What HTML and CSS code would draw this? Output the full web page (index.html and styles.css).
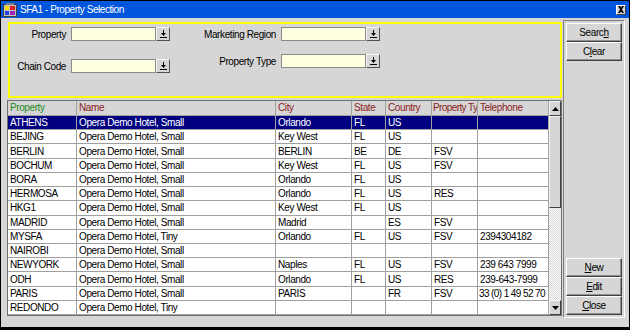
FILE: index.html
```html
<!DOCTYPE html>
<html lang="en">
<head>
    <meta charset="UTF-8">
    <title>SFA1 - Property Selection</title>
    <link rel="stylesheet" href="styles.css">
</head>
<body>
    <div class="window">
        <div class="title-bar">
            <svg class="app-icon" width="14" height="14" viewBox="0 0 14 14">
                <rect x="0.5" y="1.5" width="13" height="12" fill="#c0c0c0" stroke="#404040"/>
                <rect x="2" y="3" width="4" height="4" fill="#ffd800"/>
                <rect x="7" y="3" width="5" height="4" fill="#e02020"/>
                <rect x="2" y="8" width="4" height="4" fill="#2040e0"/>
                <rect x="7" y="8" width="5" height="4" fill="#a020c0"/>
                <path d="M3 0h8v2H3z" fill="#808080"/>
            </svg>
            <span class="title-text">SFA1 - Property Selection</span>
            <div class="close-btn">
                <svg width="8" height="7" viewBox="0 0 8 7">
                    <path d="M1 0h2l1 1.5L5 0h2L5 3.5 7 7H5L4 5.5 3 7H1l2-3.5z" fill="#000"/>
                </svg>
            </div>
        </div>

        <div class="main">
            <div class="left">
                <div class="search-panel">
                    <div class="form-col first">
                        <div class="form-row">
                            <label>Property</label>
                            <div class="combo">
                                <div class="combo-field"></div>
                                <div class="combo-btn"><svg width="7" height="8" viewBox="0 0 7 8"><path d="M3 0h1v3h2L3.5 6 1 3h2z M0 7h7v1H0z" fill="#000"/></svg></div>
                            </div>
                        </div>
                        <div class="form-row">
                            <label>Chain Code</label>
                            <div class="combo">
                                <div class="combo-field"></div>
                                <div class="combo-btn"><svg width="7" height="8" viewBox="0 0 7 8"><path d="M3 0h1v3h2L3.5 6 1 3h2z M0 7h7v1H0z" fill="#000"/></svg></div>
                            </div>
                        </div>
                    </div>
                    <div class="form-col second">
                        <div class="form-row">
                            <label>Marketing Region</label>
                            <div class="combo">
                                <div class="combo-field"></div>
                                <div class="combo-btn"><svg width="7" height="8" viewBox="0 0 7 8"><path d="M3 0h1v3h2L3.5 6 1 3h2z M0 7h7v1H0z" fill="#000"/></svg></div>
                            </div>
                        </div>
                        <div class="form-row">
                            <label>Property Type</label>
                            <div class="combo">
                                <div class="combo-field"></div>
                                <div class="combo-btn"><svg width="7" height="8" viewBox="0 0 7 8"><path d="M3 0h1v3h2L3.5 6 1 3h2z M0 7h7v1H0z" fill="#000"/></svg></div>
                            </div>
                        </div>
                    </div>
                </div>

                <div class="grid">
                    <div class="table">
                        <div class="head">
                            <span class="key">Property</span>
                            <span>Name</span>
                            <span>City</span>
                            <span>State</span>
                            <span>Country</span>
                            <span class="tight">Property Type</span>
                            <span>Telephone</span>
                        </div>
                        <div class="rows">
                            <div class="row selected"><span>ATHENS</span><span>Opera Demo Hotel, Small</span><span>Orlando</span><span>FL</span><span>US</span><span></span><span></span></div>
                            <div class="row"><span>BEJING</span><span>Opera Demo Hotel, Small</span><span>Key West</span><span>FL</span><span>US</span><span></span><span></span></div>
                            <div class="row"><span>BERLIN</span><span>Opera Demo Hotel, Small</span><span>BERLIN</span><span>BE</span><span>DE</span><span>FSV</span><span></span></div>
                            <div class="row"><span>BOCHUM</span><span>Opera Demo Hotel, Small</span><span>Key West</span><span>FL</span><span>US</span><span>FSV</span><span></span></div>
                            <div class="row"><span>BORA</span><span>Opera Demo Hotel, Small</span><span>Orlando</span><span>FL</span><span>US</span><span></span><span></span></div>
                            <div class="row"><span>HERMOSA</span><span>Opera Demo Hotel, Small</span><span>Orlando</span><span>FL</span><span>US</span><span>RES</span><span></span></div>
                            <div class="row"><span>HKG1</span><span>Opera Demo Hotel, Small</span><span>Key West</span><span>FL</span><span>US</span><span></span><span></span></div>
                            <div class="row"><span>MADRID</span><span>Opera Demo Hotel, Small</span><span>Madrid</span><span></span><span>ES</span><span>FSV</span><span></span></div>
                            <div class="row"><span>MYSFA</span><span>Opera Demo Hotel, Tiny</span><span>Orlando</span><span>FL</span><span>US</span><span>FSV</span><span>2394304182</span></div>
                            <div class="row"><span>NAIROBI</span><span>Opera Demo Hotel, Small</span><span></span><span></span><span></span><span></span><span></span></div>
                            <div class="row"><span>NEWYORK</span><span>Opera Demo Hotel, Small</span><span>Naples</span><span>FL</span><span>US</span><span>FSV</span><span>239 643 7999</span></div>
                            <div class="row"><span>ODH</span><span>Opera Demo Hotel, Small</span><span>Orlando</span><span>FL</span><span>US</span><span>RES</span><span>239-643-7999</span></div>
                            <div class="row"><span>PARIS</span><span>Opera Demo Hotel, Small</span><span>PARIS</span><span></span><span>FR</span><span>FSV</span><span class="tight">33 (0) 1 49 52 70</span></div>
                            <div class="row"><span>REDONDO</span><span>Opera Demo Hotel, Tiny</span><span></span><span></span><span></span><span></span><span></span></div>
                        </div>
                    </div>
                    <div class="scrollbar">
                        <div class="sb-btn"><svg width="7" height="4" viewBox="0 0 7 4"><path d="M3.5 0L7 4H0z" fill="#000"/></svg></div>
                        <div class="sb-thumb"></div>
                        <div class="sb-track"></div>
                        <div class="sb-btn"><svg width="7" height="4" viewBox="0 0 7 4"><path d="M0 0h7L3.5 4z" fill="#000"/></svg></div>
                    </div>
                </div>
            </div>

            <div class="side">
                <button class="btn">Searc<u>h</u></button>
                <button class="btn">C<u>l</u>ear</button>
                <div class="spacer"></div>
                <button class="btn"><u>N</u>ew</button>
                <button class="btn"><u>E</u>dit</button>
                <button class="btn"><u>C</u>lose</button>
            </div>
        </div>
    </div>
</body>
</html>
```

FILE: styles.css
```css
* {
    box-sizing: border-box;
}

body {
    margin: 0;
    font-family: 'Liberation Sans', Arial, sans-serif;
    font-size: 10px;
    letter-spacing: -0.4px;
    color: #000;
    background-color: #d6d6d6;
}

.window {
    width: 630px;
    height: 330px;
    border: 1px solid #000;
    border-bottom-width: 3px;
    background-color: #d6d6d6;
    display: flex;
    flex-direction: column;
}

.title-bar {
    height: 17px;
    background-color: #0055dd;
    color: #fff;
    display: flex;
    align-items: center;
    gap: 3px;
    padding: 0 3px 0 2px;
    font-size: 10px;
    letter-spacing: -0.45px;
}

.title-text {
    flex-grow: 1;
}

.close-btn {
    width: 10px;
    height: 10px;
    background-color: #d6d6d6;
    border: 1px solid;
    border-color: #fff #404040 #404040 #fff;
    display: flex;
    justify-content: center;
    align-items: center;
}

.main {
    display: flex;
    padding-left: 6px;
}

.left {
    width: 555px;
    padding-top: 4px;
    display: flex;
    flex-direction: column;
}

/* search criteria box */
.search-panel {
    margin-left: 1px;
    width: 554px;
    height: 76px;
    border: 2px solid #ffff00;
    padding-top: 3px;
    display: flex;
    gap: 20px;
}

.form-col {
    display: flex;
    flex-direction: column;
}

.form-col.first {
    gap: 18px;
}

.form-col.second {
    gap: 13px;
}

.form-row {
    height: 14px;
    display: flex;
    align-items: center;
    gap: 5px;
}

.form-row label {
    text-align: right;
    white-space: nowrap;
}

.first label {
    width: 56px;
}

.second label {
    width: 86px;
}

.combo {
    display: flex;
}

.combo-field {
    width: 85px;
    height: 14px;
    border: 1px solid #8a8a8a;
    background-color: #ffffe2;
}

.combo-btn {
    width: 14px;
    height: 14px;
    background-color: #d6d6d6;
    border: 1px solid;
    border-color: #f4f4f4 #505050 #505050 #f4f4f4;
    display: flex;
    justify-content: center;
    align-items: center;
}

/* result grid */
.grid {
    margin-top: 2px;
    width: 555px;
    height: 216px;
    border: 1px solid #707070;
    background-color: #fff;
    display: flex;
}

.table {
    width: 541px;
    display: flex;
    flex-direction: column;
}

.head,
.row {
    display: grid;
    grid-template-columns: 69px 199px 76px 34px 46px 46px 71px;
}

.head {
    height: 15px;
    background-color: #d6d6d6;
    border-bottom: 1px solid #a0a0a0;
}

.head span {
    color: #8a1c1c;
    border-right: 1px solid #a0a0a0;
    padding-left: 2px;
    line-height: 14px;
    white-space: nowrap;
    overflow: hidden;
}

.head span.key {
    color: #228a22;
}

.head span.tight,
.row span.tight {
    padding-left: 1px;
    letter-spacing: -0.6px;
}

.rows {
    flex-grow: 1;
    display: flex;
    flex-direction: column;
}

.row {
    flex: 1;
    border-bottom: 1px solid #a0a0a0;
}

.row span {
    border-right: 1px solid #a0a0a0;
    padding-left: 2px;
    white-space: nowrap;
    overflow: hidden;
    display: flex;
    align-items: center;
}

.row.selected {
    background-color: #000080;
    color: #fff;
}

.scrollbar {
    width: 12px;
    display: flex;
    flex-direction: column;
    background: repeating-conic-gradient(#fff 0 25%, #d6d6d6 0 50%) 0 0 / 2px 2px;
}

.sb-btn,
.sb-thumb {
    background-color: #d6d6d6;
    border: 1px solid;
    border-color: #f4f4f4 #404040 #404040 #f4f4f4;
}

.sb-btn {
    height: 15px;
    display: flex;
    justify-content: center;
    align-items: center;
}

.sb-thumb {
    height: 92px;
}

.sb-track {
    flex-grow: 1;
}

/* button column */
.side {
    margin: 2px 0 0 1px;
    width: 62px;
    height: 298px;
    border: 1px solid;
    border-color: #808080 #fff #fff #808080;
    padding: 2px;
    display: flex;
    flex-direction: column;
}

.spacer {
    flex-grow: 1;
}

.btn {
    height: 19px;
    padding: 0;
    background-color: #d6d6d6;
    border: 1px solid;
    border-color: #fff #404040 #404040 #fff;
    box-shadow: inset -1px -1px #909090;
    font-family: inherit;
    font-size: 10px;
    letter-spacing: -0.4px;
    color: #000;
}
```
